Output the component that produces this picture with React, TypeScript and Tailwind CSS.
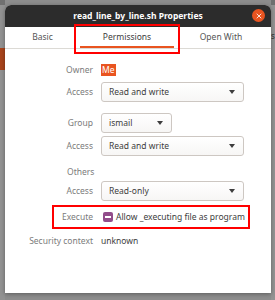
import { X } from 'lucide-react'

const font = { fontFamily: "'Noto Sans', 'DejaVu Sans', sans-serif" }

function Dropdown({ value, width }: { value: string; width: string }) {
  return (
    <div className={`${width} h-[20px] flex items-center justify-between pl-[7px] pr-[8px] rounded-[3px] border border-[#cdc7c2] bg-gradient-to-b from-white to-[#f7f6f5] text-[#3d3d3d]`}>
      <span>{value}</span>
      <span className="w-0 h-0 border-l-[3.5px] border-r-[3.5px] border-t-[4px] border-l-transparent border-r-transparent border-t-[#3d3d3d]" />
    </div>
  )
}

function Row({ label, children, className = '' }: { label: string; children: React.ReactNode; className?: string }) {
  return (
    <div className={`flex items-center ${className}`}>
      <div className="w-[88px] text-right text-[#7b7b7b]">{label}</div>
      <div className="ml-[8px] flex items-center">{children}</div>
    </div>
  )
}

export default function App() {
  return (
    <div className="w-[275px] h-[300px] bg-[#8d8d8d] flex overflow-hidden text-[8.5px] leading-none" style={font}>
      {/* background window, left strip */}
      <div className="w-[5px] flex flex-col bg-[#929292]">
        <div className="h-[5px] bg-[#707070]" />
        <div className="h-[43px]" />
        <div className="h-[22px] bg-[#a8441c]" />
        <div className="flex-1" />
      </div>

      <div className="flex flex-col">
        <div className="h-[5px]" />
        {/* dialog */}
        <div className="relative w-[266px] h-[288px] bg-white rounded-t-[6px] overflow-visible shadow-[0_1px_4px_rgba(0,0,0,0.35)] flex flex-col">
          {/* title bar */}
          <div className="h-[22px] bg-[#2c2c2c] rounded-t-[6px] flex items-center justify-center relative">
            <span className="text-white font-bold text-[8.5px]">read_line_by_line.sh Properties</span>
            <div className="absolute right-[6px] top-[4px] w-[13px] h-[13px] rounded-full bg-[#e95420] flex items-center justify-center">
              <X size={8} strokeWidth={2.5} color="#ffffff" />
            </div>
          </div>

          {/* tabs */}
          <div className="h-[22px] flex border-b border-[#dcdad5] text-[#555]">
            <div className="w-[75px] flex items-center justify-center">Basic</div>
            <div className="w-[94px] flex items-center justify-center relative text-[#3d3d3d]">
              Permissions
              <div className="absolute left-0 right-0 bottom-[0px] h-[2px] bg-[#e95420]" />
            </div>
            <div className="w-[94px] flex items-center justify-center">Open With</div>
          </div>

          {/* annotation around the active tab */}
          <div className="absolute left-[69px] top-[19px] w-[106px] h-[30px] border-2 border-[#ff0000]" />

          {/* permissions */}
          <div className="flex flex-col">
            <Row label="Owner" className="mt-[14px] h-[14px]">
              <span className="bg-[#e95420] text-white px-[1px] py-[2px]">Me</span>
            </Row>
            <Row label="Access" className="mt-[5px]">
              <Dropdown value="Read and write" width="w-[143px]" />
            </Row>
            <Row label="Group" className="mt-[11px]">
              <Dropdown value="ismail" width="w-[71px]" />
            </Row>
            <Row label="Access" className="mt-[3px]">
              <Dropdown value="Read and write" width="w-[143px]" />
            </Row>
            <div className="mt-[9px] h-[14px] flex items-center pl-[62px] text-[#7b7b7b]">Others</div>
            <Row label="Access" className="mt-[2px]">
              <Dropdown value="Read-only" width="w-[143px]" />
            </Row>

            <div className="mt-[4px] ml-[47px] w-[198px] h-[24px] border-2 border-[#ff0000] flex items-center">
              <div className="w-[39px] text-right text-[#7b7b7b]">Execute</div>
              <div className="ml-[10px] w-[10px] h-[10px] rounded-[2px] bg-[#924d8b] flex items-center justify-center">
                <div className="w-[6px] h-[1.5px] bg-white" />
              </div>
              <span className="ml-[3px] text-[#3d3d3d]">Allow _executing file as program</span>
            </div>

            <Row label="Security context" className="mt-[5px] h-[14px]">
              <span className="text-[#3d3d3d]">unknown</span>
            </Row>
          </div>
        </div>
      </div>

      {/* background window, right strip */}
      <div className="flex-1 bg-[#939393] flex flex-col">
        <div className="h-[5px] bg-[#707070]" />
        <div className="mt-[27px] text-[#333] text-[8px]">s</div>
      </div>
    </div>
  )
}
